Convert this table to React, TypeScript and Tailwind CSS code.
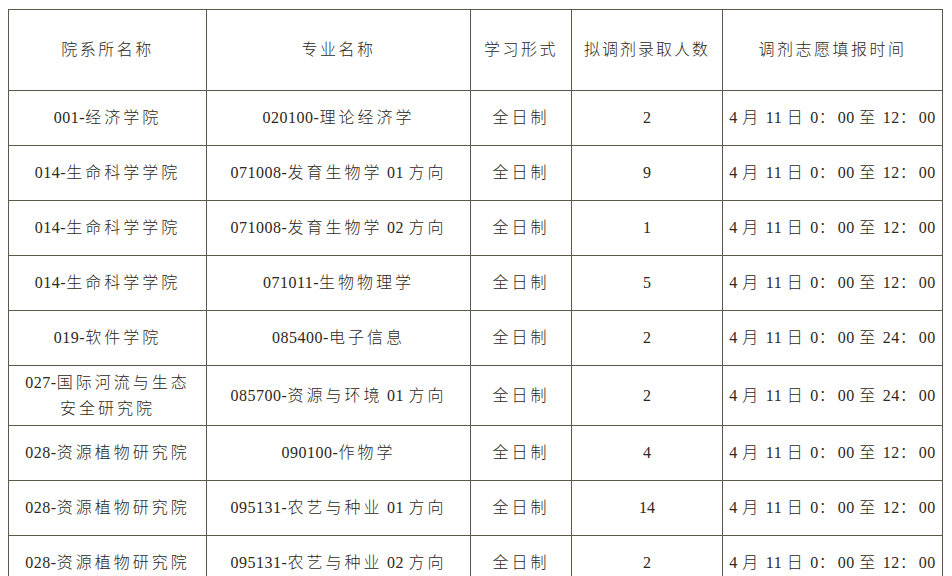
const rows: [string[], string, string, string][] = [
  [["001-经济学院"], "020100-理论经济学", "2", "4 月 11 日 0：00 至 12：00"],
  [["014-生命科学学院"], "071008-发育生物学 01 方向", "9", "4 月 11 日 0：00 至 12：00"],
  [["014-生命科学学院"], "071008-发育生物学 02 方向", "1", "4 月 11 日 0：00 至 12：00"],
  [["014-生命科学学院"], "071011-生物物理学", "5", "4 月 11 日 0：00 至 12：00"],
  [["019-软件学院"], "085400-电子信息", "2", "4 月 11 日 0：00 至 24：00"],
  [["027-国际河流与生态", "安全研究院"], "085700-资源与环境 01 方向", "2", "4 月 11 日 0：00 至 24：00"],
  [["028-资源植物研究院"], "090100-作物学", "4", "4 月 11 日 0：00 至 12：00"],
  [["028-资源植物研究院"], "095131-农艺与种业 01 方向", "14", "4 月 11 日 0：00 至 12：00"],
  [["028-资源植物研究院"], "095131-农艺与种业 02 方向", "2", "4 月 11 日 0：00 至 12：00"],
];

const cell = "border-[1.5px] border-[#5f574a] text-center align-middle p-0";

// CJK runs are letter-spaced like the printed table, latin digits stay tight
function Spaced({ text }: { text: string }) {
  const parts = text.match(/[\x00-\x7f]+|[^\x00-\x7f]+/g) ?? [];
  return (
    <>
      {parts.map((p, i) =>
        /^[\x00-\x7f]+$/.test(p) ? (
          <span key={i} className="tracking-[0.5px]">
            {p}
          </span>
        ) : (
          <span key={i} className="tracking-[3px]">
            {p}
          </span>
        )
      )}
    </>
  );
}

export default function App() {
  return (
    <div
      className="bg-white w-[952px] h-[576px] overflow-hidden pt-[9px] pl-[8px] text-[16px] text-[#2b2820]"
      style={{ fontFamily: '"Liberation Serif", "Noto Sans CJK SC", serif' }}
    >
      <table className="border-collapse table-fixed w-[934px] font-light">
        <colgroup>
          <col className="w-[198px]" />
          <col className="w-[264px]" />
          <col className="w-[101px]" />
          <col className="w-[151px]" />
          <col className="w-[220px]" />
        </colgroup>
        <thead>
          <tr className="h-[81px]">
            <th className={`${cell} font-light tracking-[2.5px]`}>院系所名称</th>
            <th className={`${cell} font-light tracking-[2.5px]`}>专业名称</th>
            <th className={`${cell} font-light tracking-[2.5px]`}>学习形式</th>
            <th className={`${cell} font-light tracking-[2px]`}>拟调剂录取人数</th>
            <th className={`${cell} font-light tracking-[2.5px]`}>调剂志愿填报时间</th>
          </tr>
        </thead>
        <tbody>
          {rows.map(([dept, major, num, time], i) => (
            <tr key={i} className={dept.length > 1 ? "h-[60px]" : "h-[55px]"}>
              <td className={`${cell} leading-[26px]`}>
                {dept.map((d, j) => (
                  <div key={j}>
                    <Spaced text={d} />
                  </div>
                ))}
              </td>
              <td className={cell}>
                <Spaced text={major} />
              </td>
              <td className={`${cell} tracking-[3px]`}>全日制</td>
              <td className={cell}>{num}</td>
              <td className={`${cell} whitespace-nowrap`}>
                <Spaced text={time} />
              </td>
            </tr>
          ))}
        </tbody>
      </table>
    </div>
  );
}
